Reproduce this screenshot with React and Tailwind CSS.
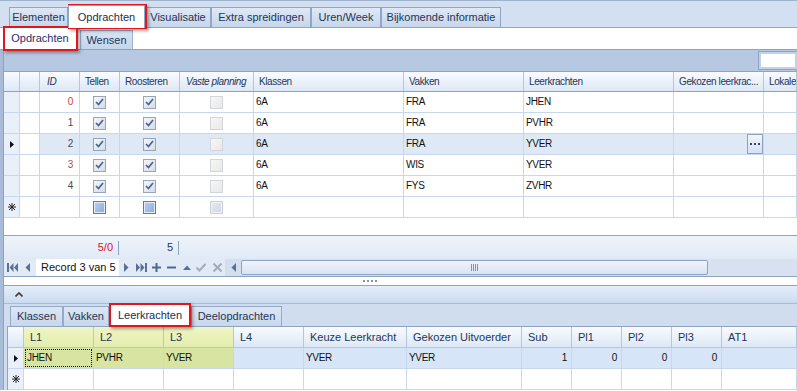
import React from 'react';

const topTabs = [
  { label: 'Elementen', w: 'w-[59px]' },
  { label: 'Opdrachten', w: 'w-[77px]', active: true },
  { label: 'Visualisatie', w: 'w-[66px]' },
  { label: 'Extra spreidingen', w: 'w-[100px]' },
  { label: 'Uren/Week', w: 'w-[70px]' },
  { label: 'Bijkomende informatie', w: 'w-[120px]' },
];

const bottomTabs = [
  { label: 'Klassen', w: 'w-[53px]' },
  { label: 'Vakken', w: 'w-[46px]' },
  { label: 'Leerkrachten', w: 'w-[82px]', active: true },
  { label: 'Deelopdrachten', w: 'w-[91px]' },
];

const rows = [
  { id: 0, idColor: 'text-[#c2453a]', vak: 'FRA', lk: 'JHEN' },
  { id: 1, idColor: 'text-[#4a4a4a]', vak: 'FRA', lk: 'PVHR' },
  { id: 2, idColor: 'text-[#4a4a4a]', vak: 'FRA', lk: 'YVER', selected: true },
  { id: 3, idColor: 'text-[#b4503e]', vak: 'WIS', lk: 'YVER' },
  { id: 4, idColor: 'text-[#4a4a4a]', vak: 'FYS', lk: 'ZVHR' },
];

const topCols = 'grid grid-cols-[16px_20px_40px_40px_60px_74px_150px_120px_150px_90px_1fr]';
const botCols = 'grid grid-cols-[16px_70px_70px_70px_70px_103px_115px_50px_50px_50px_50px_1fr]';

const hCell =
  'h-[19px] border-r border-[#b3c5df] bg-gradient-to-b from-[#f9fbff] to-[#dde8f6] flex items-center px-[5px] text-[#1e3658] text-[10px] tracking-[-0.4px] whitespace-nowrap overflow-hidden';
const bCell =
  'h-[21px] border-r border-b border-[#c6d7ef] flex items-center px-[2px] text-[10px] tracking-[-0.3px] whitespace-nowrap overflow-hidden';

function RedBox({ className }) {
  return (
    <div
      className={`absolute border-2 border-[#e3161c] shadow-[2px_2px_3px_rgba(0,0,0,0.35)] pointer-events-none ${className}`}
    />
  );
}

function Tick() {
  return (
    <svg width="9" height="8" viewBox="0 0 9 8">
      <path d="M1 4 L3.5 6.5 L8 1" stroke="#44659a" strokeWidth="1.7" fill="none" />
    </svg>
  );
}

function Check({ kind }) {
  if (kind === 'on') {
    return (
      <div className="w-[13px] h-[13px] border border-[#98a6ba] bg-gradient-to-br from-[#f5f6f8] to-[#d6dce5] flex items-center justify-center">
        <Tick />
      </div>
    );
  }
  if (kind === 'off') {
    return <div className="w-[13px] h-[13px] border border-[#d2d6dc] bg-gradient-to-br from-[#f7f7f7] to-[#e8e8e8]" />;
  }
  if (kind === 'new') {
    return (
      <div className="w-[13px] h-[13px] border border-[#5a7bab] bg-[#e2ecf8] p-px">
        <div className="w-full h-full bg-gradient-to-br from-[#b8cfee] to-[#8dafdc]" />
      </div>
    );
  }
  return (
    <div className="w-[13px] h-[13px] border border-[#c8d0dc] bg-[#eef1f5] p-px">
      <div className="w-full h-full bg-gradient-to-br from-[#e3e8ef] to-[#d3dae4]" />
    </div>
  );
}

function Arrow() {
  return (
    <svg width="4" height="7" viewBox="0 0 4 7">
      <path d="M0 0 L4 3.5 L0 7 Z" fill="#111" />
    </svg>
  );
}

function Star() {
  return (
    <svg width="8" height="8" viewBox="0 0 8 8">
      <g stroke="#222" strokeWidth="1">
        <path d="M4 0 V8 M0 4 H8 M1 1 L7 7 M7 1 L1 7" />
      </g>
    </svg>
  );
}

function NavIcon({ type }) {
  const c = '#58709a';
  const g = '#a3acb9';
  if (type === 'first')
    return (
      <svg width="11" height="9" viewBox="0 0 11 9">
        <rect x="0" y="0" width="2" height="9" fill={c} />
        <path d="M6.5 0 L2.5 4.5 L6.5 9 Z M11 0 L7 4.5 L11 9 Z" fill={c} />
      </svg>
    );
  if (type === 'last')
    return (
      <svg width="11" height="9" viewBox="0 0 11 9">
        <rect x="9" y="0" width="2" height="9" fill={c} />
        <path d="M0 0 L4 4.5 L0 9 Z M4.5 0 L8.5 4.5 L4.5 9 Z" fill={c} />
      </svg>
    );
  if (type === 'prev')
    return (
      <svg width="5" height="9" viewBox="0 0 5 9">
        <path d="M5 0 L0.5 4.5 L5 9 Z" fill={c} />
      </svg>
    );
  if (type === 'next')
    return (
      <svg width="5" height="9" viewBox="0 0 5 9">
        <path d="M0 0 L4.5 4.5 L0 9 Z" fill={c} />
      </svg>
    );
  if (type === 'plus')
    return (
      <svg width="9" height="9" viewBox="0 0 9 9">
        <path d="M0 4.5 H9 M4.5 0 V9" stroke="#4f6890" strokeWidth="2" />
      </svg>
    );
  if (type === 'minus')
    return (
      <svg width="9" height="9" viewBox="0 0 9 9">
        <path d="M0 4.5 H9" stroke="#4f6890" strokeWidth="2" />
      </svg>
    );
  if (type === 'up')
    return (
      <svg width="8" height="5" viewBox="0 0 8 5">
        <path d="M0 5 L4 0.5 L8 5 Z" fill={c} />
      </svg>
    );
  if (type === 'ok')
    return (
      <svg width="10" height="9" viewBox="0 0 10 9">
        <path d="M0.5 4.5 L3.5 7.5 L9.5 1" stroke={g} strokeWidth="2" fill="none" />
      </svg>
    );
  return (
    <svg width="9" height="9" viewBox="0 0 9 9">
      <path d="M0.5 0.5 L8.5 8.5 M8.5 0.5 L0.5 8.5" stroke={g} strokeWidth="2" />
    </svg>
  );
}

function TopTabs() {
  return (
    <div className="h-[28px] flex items-end pl-[9px] bg-[#d3e0f1] border-t border-[#9fb3cf] border-b border-b-[#8fa6c8]">
      {topTabs.map((t) =>
        t.active ? (
          <div
            key={t.label}
            className={`${t.w} h-[23px] -mb-px bg-white border border-b-0 border-[#8fa6c8] flex items-center justify-center text-[#1a2f52] relative z-10`}
          >
            {t.label}
          </div>
        ) : (
          <div
            key={t.label}
            className={`${t.w} h-[20px] bg-gradient-to-b from-[#dfe8f5] to-[#c6d6eb] border border-b-0 border-[#8fa6c8] flex items-center justify-center text-[#1e3658]`}
          >
            {t.label}
          </div>
        )
      )}
    </div>
  );
}

function SubTabs() {
  return (
    <div className="h-[22px] flex items-end bg-white border-b border-[#8ea2c2]">
      <div className="w-[77px] pl-[3px] h-[21px] flex items-center justify-center text-[#2a2d6a]">Opdrachten</div>
      <div className="w-[3px]" />
      <div className="w-[53px] h-[19px] bg-gradient-to-b from-[#d9e4f3] to-[#c5d5ea] border border-b-0 border-[#9db2d1] flex items-center justify-center text-[#1e3658]">
        Wensen
      </div>
    </div>
  );
}

function TopGrid() {
  return (
    <div>
      {/* find panel */}
      <div className="h-[22px] bg-[#b7c9e2] border-b border-[#8ea2c2] flex items-center">
        <div className="ml-auto w-[39px] h-[19px] border border-[#8ea2c2] bg-[#c3d2e8] p-[2px] border-r-0">
          <div className="w-full h-full bg-white" />
        </div>
      </div>
      {/* header */}
      <div className={`${topCols} border-b border-[#8ea2c2]`}>
        <div className={hCell} />
        <div className={hCell} />
        <div className={`${hCell} italic pl-[7px]`}>ID</div>
        <div className={hCell}>Tellen</div>
        <div className={hCell}>Roosteren</div>
        <div className={`${hCell} italic pl-[6px] pr-0`}>Vaste planning</div>
        <div className={hCell}>Klassen</div>
        <div className={hCell}>Vakken</div>
        <div className={hCell}>Leerkrachten</div>
        <div className={`${hCell} pr-[2px]`}>Gekozen leerkrac...</div>
        <div className={hCell}>Lokalen</div>
      </div>
      {rows.map((r) => {
        const bg = r.selected ? 'bg-[#dfe9f6]' : 'bg-white';
        return (
          <div key={r.id} className={topCols}>
            <div className={`${bCell} bg-[#e9f0f9] justify-center`}>{r.selected && <Arrow />}</div>
            <div className={`${bCell} bg-white`} />
            <div className={`${bCell} ${bg} justify-end pr-[6px] ${r.idColor}`}>{r.id}</div>
            <div className={`${bCell} ${bg} justify-center`}>
              <Check kind="on" />
            </div>
            <div className={`${bCell} ${bg} justify-center`}>
              <Check kind="on" />
            </div>
            <div className={`${bCell} ${bg} justify-center`}>
              <Check kind="off" />
            </div>
            <div className={`${bCell} ${bg} text-[#111]`}>6A</div>
            <div className={`${bCell} ${bg} text-[#111]`}>{r.vak}</div>
            <div className={`${bCell} ${bg} text-[#111]`}>{r.lk}</div>
            <div className={`${bCell} ${bg} justify-end pr-0`}>
              {r.selected && (
                <div className="w-[16px] h-[20px] border border-[#8ea2c2] bg-gradient-to-b from-[#f1f5fb] to-[#d5e1f1] flex items-center justify-center gap-[2px]">
                  <span className="w-[2px] h-[2px] bg-[#2c4670]" />
                  <span className="w-[2px] h-[2px] bg-[#2c4670]" />
                  <span className="w-[2px] h-[2px] bg-[#2c4670]" />
                </div>
              )}
            </div>
            <div className={`${bCell} ${bg}`} />
          </div>
        );
      })}
      {/* new row */}
      <div className={topCols}>
        <div className={`${bCell} bg-[#e9f0f9] justify-center`}>
          <Star />
        </div>
        <div className={bCell} />
        <div className={bCell} />
        <div className={`${bCell} justify-center`}>
          <Check kind="new" />
        </div>
        <div className={`${bCell} justify-center`}>
          <Check kind="new" />
        </div>
        <div className={`${bCell} justify-center`}>
          <Check kind="newoff" />
        </div>
        <div className={bCell} />
        <div className={bCell} />
        <div className={bCell} />
        <div className={bCell} />
        <div className={bCell} />
      </div>
      <div className="h-[17px] bg-white" />
      {/* footer summary */}
      <div className={`${topCols} h-[24px] border-t border-[#8ea2c2] bg-gradient-to-b from-[#eef4fb] to-[#e0e9f5]`}>
        <div />
        <div />
        <div />
        <div className="flex items-center justify-end">
          <span className="text-[#e0102a] mr-[5px]">5/0</span>
          <span className="w-px h-[14px] bg-[#8ea2c2] mr-[1px]" />
        </div>
        <div className="flex items-center justify-end">
          <span className="text-[#1e3658] mr-[5px]">5</span>
          <span className="w-px h-[14px] bg-[#8ea2c2] mr-[1px]" />
        </div>
      </div>
      {/* navigator */}
      <div className="h-[17px] flex items-stretch bg-[#e2eaf5]">
        <div className="w-[17px] flex items-center justify-center">
          <NavIcon type="first" />
        </div>
        <div className="w-[13px] flex items-center justify-center">
          <NavIcon type="prev" />
        </div>
        <div className="w-[2px]" />
        <div className="w-[83px] bg-white flex items-center pl-[5px] text-[#111]">Record 3 van 5</div>
        <div className="w-[14px] flex items-center justify-center">
          <NavIcon type="next" />
        </div>
        <div className="w-[17px] flex items-center justify-center">
          <NavIcon type="last" />
        </div>
        <div className="w-[13px] flex items-center justify-center">
          <NavIcon type="plus" />
        </div>
        <div className="w-[17px] flex items-center justify-center">
          <NavIcon type="minus" />
        </div>
        <div className="w-[13px] flex items-center justify-center">
          <NavIcon type="up" />
        </div>
        <div className="w-[16px] flex items-center justify-center">
          <NavIcon type="ok" />
        </div>
        <div className="w-[16px] flex items-center justify-center">
          <NavIcon type="x" />
        </div>
        <div className="w-[16px] flex items-center justify-center bg-[#d3deee]">
          <NavIcon type="prev" />
        </div>
        <div className="w-[467px] py-px bg-[#d3deee]">
          <div className="h-full rounded-[2px] border border-[#8ea5c6] bg-gradient-to-b from-[#eff4fb] to-[#d8e3f2] flex items-center justify-center gap-[1px]">
            <span className="w-px h-[7px] bg-[#7f95b8]" />
            <span className="w-px h-[7px] bg-[#7f95b8]" />
            <span className="w-px h-[7px] bg-[#7f95b8]" />
            <span className="w-px h-[7px] bg-[#7f95b8]" />
          </div>
        </div>
        <div className="flex-1 bg-[#d7e1f0]" />
      </div>
    </div>
  );
}

function Splitter() {
  return (
    <div className="h-[10px] bg-white border-y border-[#8ea2c2] flex items-center justify-center">
      <div className="flex gap-[2px] ml-[-62px]">
        <span className="w-[2px] h-[2px] bg-[#7f95b8]" />
        <span className="w-[2px] h-[2px] bg-[#7f95b8]" />
        <span className="w-[2px] h-[2px] bg-[#7f95b8]" />
        <span className="w-[2px] h-[2px] bg-[#7f95b8]" />
      </div>
    </div>
  );
}

function BottomPanel() {
  const bh = 'h-[21px] border-r border-b border-[#b3c5df] flex items-center px-[6px] text-[#1e3658] whitespace-nowrap';
  const norm = 'bg-gradient-to-b from-[#f9fbff] to-[#dde8f6]';
  const lime = 'bg-gradient-to-b from-[#eff5c4] to-[#e3edaf]';
  const dc =
    'h-[21px] border-r border-b border-[#c6d7ef] flex items-center px-[2px] whitespace-nowrap text-[#111] text-[10px] tracking-[-0.3px]';
  return (
    <div className="bg-[#d0ddef]">
      <div className="h-[18px] bg-gradient-to-b from-[#e5eef9] to-[#cbdbf0] flex items-center pl-[11px] border-b border-[#a9bcd6]">
        <svg width="8" height="5" viewBox="0 0 8 5">
          <path d="M0.5 4.5 L4 1 L7.5 4.5" stroke="#3a3a3a" strokeWidth="1.6" fill="none" />
        </svg>
      </div>
      <div className="h-[22px] flex items-end pl-[6px]">
        {bottomTabs.map((t) =>
          t.active ? (
            <div key={t.label} className={`${t.w} h-[22px] bg-white flex items-center justify-center text-[#1a2f52]`}>
              {t.label}
            </div>
          ) : (
            <div
              key={t.label}
              className={`${t.w} h-[20px] bg-gradient-to-b from-[#dde7f4] to-[#c8d7eb] border border-b-0 border-[#94aacb] flex items-center justify-center text-[#1e3658]`}
            >
              {t.label}
            </div>
          )
        )}
      </div>
      <div className="ml-[3px] border-l border-t border-[#8ea2c2] bg-white">
        <div className={botCols}>
          <div className={`${bh} ${norm}`} />
          <div className={`${bh} ${lime}`}>L1</div>
          <div className={`${bh} ${lime}`}>L2</div>
          <div className={`${bh} ${lime}`}>L3</div>
          <div className={`${bh} ${norm}`}>L4</div>
          <div className={`${bh} ${norm} px-[4px]`}>Keuze Leerkracht</div>
          <div className={`${bh} ${norm} px-[4px]`}>Gekozen Uitvoerder</div>
          <div className={`${bh} ${norm} px-[4px]`}>Sub</div>
          <div className={`${bh} ${norm} px-[4px]`}>Pl1</div>
          <div className={`${bh} ${norm} px-[4px]`}>Pl2</div>
          <div className={`${bh} ${norm} px-[4px]`}>Pl3</div>
          <div className={`${bh} ${norm} px-[4px]`}>AT1</div>
        </div>
        <div className={botCols}>
          <div className={`${dc} bg-[#e9f0f9] justify-center`}>
            <Arrow />
          </div>
          <div className="h-[21px] border-b border-r border-[#c6d7ef] bg-[#d8e5a2] p-px">
            <div className="h-full border border-dotted border-[#111] flex items-center pl-px text-[#111] text-[10px] tracking-[-0.3px]">
              JHEN
            </div>
          </div>
          <div className={`${dc} bg-[#d8e5a2]`}>PVHR</div>
          <div className={`${dc} bg-[#d8e5a2]`}>YVER</div>
          <div className={`${dc} bg-[#d6e6f8]`} />
          <div className={`${dc} bg-[#d6e6f8]`}>YVER</div>
          <div className={`${dc} bg-[#d6e6f8]`}>YVER</div>
          <div className={`${dc} bg-[#d6e6f8] justify-end pr-[4px]`}>1</div>
          <div className={`${dc} bg-[#d6e6f8] justify-end pr-[4px] text-[#4a3030]`}>0</div>
          <div className={`${dc} bg-[#d6e6f8] justify-end pr-[4px] text-[#4a3030]`}>0</div>
          <div className={`${dc} bg-[#d6e6f8] justify-end pr-[4px] text-[#4a3030]`}>0</div>
          <div className={`${dc} bg-[#d6e6f8]`} />
        </div>
        <div className={botCols}>
          <div className={`${dc} bg-[#e9f0f9] justify-center`}>
            <Star />
          </div>
          <div className={dc} />
          <div className={dc} />
          <div className={dc} />
          <div className={dc} />
          <div className={dc} />
          <div className={dc} />
          <div className={dc} />
          <div className={dc} />
          <div className={dc} />
          <div className={dc} />
          <div className={dc} />
        </div>
      </div>
    </div>
  );
}

export default function App() {
  return (
    <div className="w-[797px] h-[391px] overflow-hidden bg-white relative font-['Liberation_Sans',Arial,sans-serif] text-[11px] leading-none">
      <TopTabs />
      <SubTabs />
      <div className="flex">
        <div className="w-[4px] shrink-0 bg-[#a8bbd7] border-r border-[#8ea2c2]" />
        <div className="w-[793px]">
          <TopGrid />
          <Splitter />
          <BottomPanel />
        </div>
      </div>

      {/* annotation boxes */}
      <RedBox className="left-[68px] top-[4px] w-[79px] h-[25px]" />
      <RedBox className="left-[3px] top-[26px] w-[75px] h-[25px]" />
      <RedBox className="left-[109px] top-[303px] w-[82px] h-[24px]" />
    </div>
  );
}
